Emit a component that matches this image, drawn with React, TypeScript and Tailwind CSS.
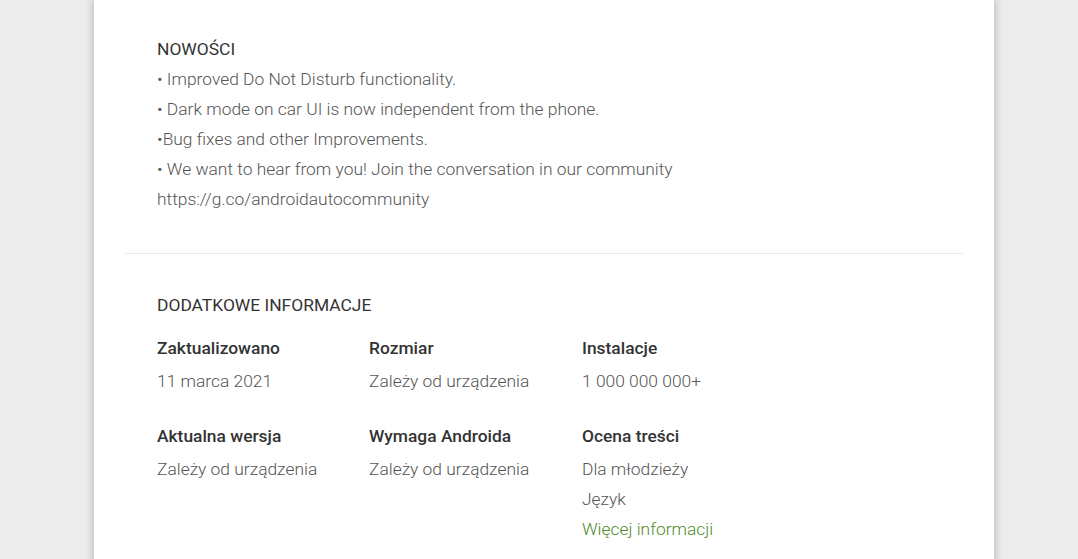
const changes = [
  "• Improved Do Not Disturb functionality.",
  "• Dark mode on car UI is now independent from the phone.",
  "•Bug fixes and other Improvements.",
  "• We want to hear from you! Join the conversation in our community",
  "https://g.co/androidautocommunity",
];

type Info = { label: string; values: string[]; link?: string };

const infoRows: Info[][] = [
  [
    { label: "Zaktualizowano", values: ["11 marca 2021"] },
    { label: "Rozmiar", values: ["Zależy od urządzenia"] },
    { label: "Instalacje", values: ["1 000 000 000+"] },
  ],
  [
    { label: "Aktualna wersja", values: ["Zależy od urządzenia"] },
    { label: "Wymaga Androida", values: ["Zależy od urządzenia"] },
    { label: "Ocena treści", values: ["Dla młodzieży", "Język"], link: "Więcej informacji" },
  ],
];

export default function App() {
  return (
    <div className="h-[559px] overflow-hidden bg-[#ececec] font-['Roboto',sans-serif]">
      <div className="ml-[94px] w-[900px] min-h-[600px] bg-white px-[31px] shadow-[0_0_9px_rgba(0,0,0,0.28)]">
        <section className="px-[32px] pt-[34px] pb-[39px]">
          <h2 className="text-[17.4px] leading-[30px] font-normal text-[#333]">NOWOŚCI</h2>
          <div className="text-[17.4px] leading-[30px] font-light text-[#555]">
            {changes.map((line) => (
              <div key={line}>{line}</div>
            ))}
          </div>
        </section>

        <div className="h-px bg-[#e9e9e9]" />

        <section className="px-[32px] pt-[36px]">
          <h2 className="text-[17.4px] leading-[30px] font-normal text-[#333]">DODATKOWE INFORMACJE</h2>
          <div className="mt-[16px] flex flex-col gap-[28px]">
            {infoRows.map((row, i) => (
              <div key={i} className="grid grid-cols-[212px_213px_1fr]">
                {row.map((item) => (
                  <div key={item.label}>
                    <div className="mb-[6px] text-[17.4px] leading-[24px] font-medium text-[#333]">{item.label}</div>
                    {item.values.map((v) => (
                      <div key={v} className="text-[17.4px] leading-[30px] font-light text-[#555]">
                        {v}
                      </div>
                    ))}
                    {item.link ? (
                      <a href="#" className="block text-[17.4px] leading-[30px] font-light text-[#4f8a2b]">
                        {item.link}
                      </a>
                    ) : null}
                  </div>
                ))}
              </div>
            ))}
          </div>
        </section>
      </div>
    </div>
  );
}
